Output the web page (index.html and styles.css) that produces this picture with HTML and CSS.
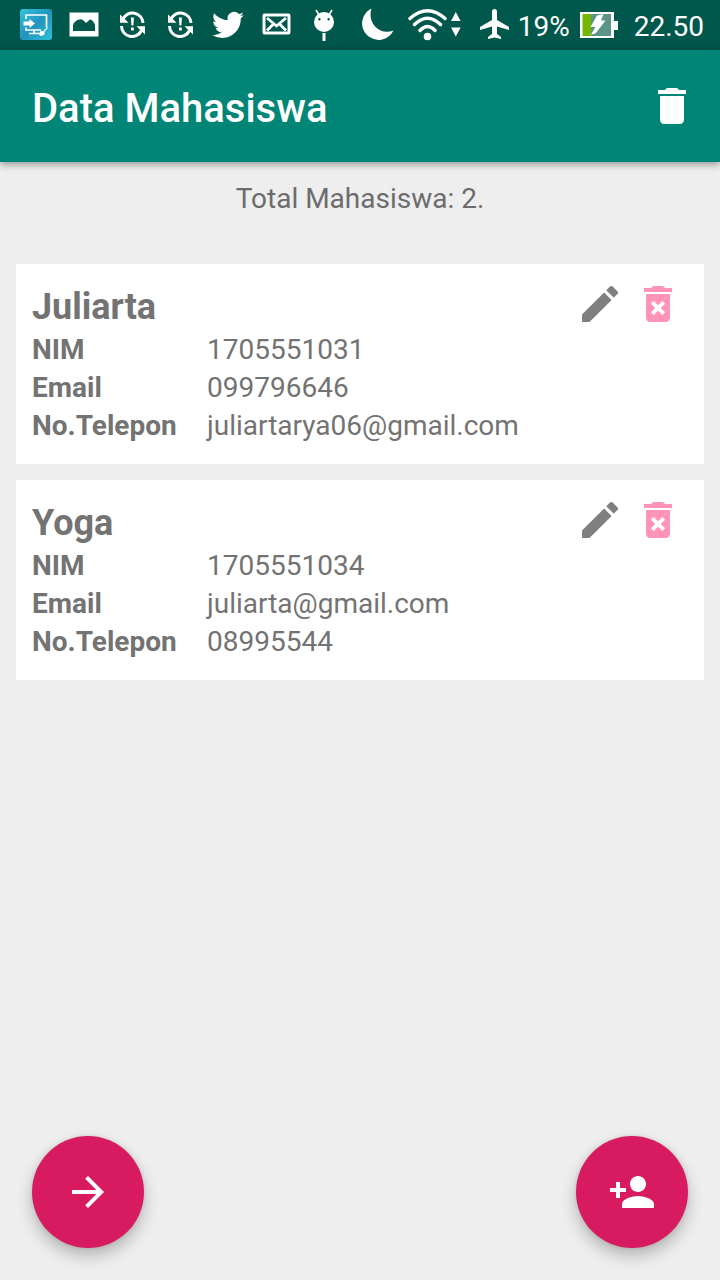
FILE: index.html
```html
<!DOCTYPE html>
<html lang="id">
<head>
<meta charset="utf-8">
<meta name="viewport" content="width=device-width, initial-scale=1">
<title>Data Mahasiswa</title>
<link rel="stylesheet" href="styles.css">
</head>
<body>
<svg class="sprite" aria-hidden="true">
  <symbol id="edit" viewBox="0 0 24 24"><path d="M3 17.25V21h3.75L17.81 9.94l-3.75-3.75L3 17.25zM20.71 7.04c.39-.39.39-1.02 0-1.41l-2.34-2.34c-.39-.39-1.02-.39-1.41 0l-1.83 1.83 3.75 3.75 1.83-1.83z"/></symbol>
  <symbol id="remove" viewBox="0 0 24 24"><path d="M6 19c0 1.1.9 2 2 2h8c1.1 0 2-.9 2-2V7H6v12zm2.46-7.12l1.41-1.41L12 12.59l2.12-2.12 1.41 1.41L13.41 14l2.12 2.12-1.41 1.41L12 15.41l-2.12 2.12-1.41-1.41L10.59 14l-2.13-2.12zM15.5 4l-1-1h-5l-1 1H5v2h14V4z"/></symbol>
  <symbol id="sync" viewBox="0 0 48 50">
    <path d="M15 19A10.500 10.500 0 0 1 35 23M13.500 26A10.500 10.500 0 0 0 33.500 30.500" fill="none" stroke="currentColor" stroke-width="3"/>
    <path d="M12 14.500v8.300h8.500zM37 34.500v-8.300h-8.500zM22.900 17.500h3l-.5 8h-2zM23 27.500h2.800v3H23z"/>
  </symbol>
</svg>
<div class="screen">
  <div class="status">
    <div class="notices">
      <svg class="notice" viewBox="0 0 48 50">
        <defs><linearGradient id="tile" x1="0" y1="0" x2="1" y2="1"><stop offset="0" stop-color="#35c4dc"/><stop offset=".5" stop-color="#2194bd"/><stop offset="1" stop-color="#2fc0d8"/></linearGradient></defs>
        <rect x="8" y="9" width="32" height="31" rx="3" fill="url(#tile)"/>
        <path d="M14 19v-4h20.500v12M14 27.500V30h15M22 30v3M17 33.500h10" fill="none" stroke="#fff" stroke-width="1.700"/>
        <path d="M11.500 21.500h6V19l5.500 4.500-5.500 4.500v-2.500h-6zM35 27l1 .8-3.500 4c1 3-2 4.500-4.500 4-1.500-1-.8-3.500.5-4.500 1-.8 2-.7 3-.1z"/>
      </svg>
      <svg class="notice" viewBox="0 0 48 50"><path fill-rule="evenodd" d="M9.500 12.500h29v24h-29zM13 31h22v-6.500Q32 19 30 19.500L26 23Q22 18 19.500 19.500Q15 20 13 25z"/></svg>
      <svg class="notice"><use href="#sync"/></svg>
      <svg class="notice"><use href="#sync"/></svg>
      <svg class="notice" viewBox="0 0 48 50"><path transform="translate(8 9) scale(1.333)" d="M23.953 4.570a10 10 0 01-2.825.775 4.958 4.958 0 002.163-2.723c-.951.555-2.005.959-3.127 1.184a4.920 4.920 0 00-8.384 4.482C7.690 8.095 4.067 6.130 1.640 3.162a4.822 4.822 0 00-.666 2.475c0 1.710.870 3.213 2.188 4.096a4.904 4.904 0 01-2.228-.616v.060a4.923 4.923 0 003.946 4.827 4.996 4.996 0 01-2.212.085 4.936 4.936 0 004.604 3.417 9.867 9.867 0 01-6.102 2.105c-.390 0-.779-.023-1.170-.067a13.995 13.995 0 007.557 2.209c9.053 0 13.998-7.496 13.998-13.985 0-.210 0-.420-.015-.630A9.935 9.935 0 0024 4.590z"/></svg>
      <svg class="notice" viewBox="0 0 48 50">
        <rect x="12" y="15" width="25" height="18" rx=".5" fill="none" stroke="currentColor" stroke-width="3"/>
        <path d="M15 18l9.500 8 9.500-8M15 30.500l6.500-6.500M34 30.500L27.500 24" fill="none" stroke="currentColor" stroke-width="2.800"/>
      </svg>
      <svg class="notice" viewBox="0 0 48 50">
        <path fill-rule="evenodd" d="M14 22a10 10 0 0 1 20 0a10 10 0 0 1-20 0zM18.200 19.200a1.200 1.200 0 1 0 2.400 0a1.200 1.200 0 1 0-2.400 0zM27.400 19.200a1.200 1.200 0 1 0 2.400 0a1.200 1.200 0 1 0-2.400 0z"/>
        <path d="M16 10l3 5M32 10l-3 5" stroke="currentColor" stroke-width="1.500"/>
        <path d="M22.500 33h3v8h-3z"/>
      </svg>
    </div>
    <div class="system">
      <svg class="moon" viewBox="0 0 34 50"><path d="M11.500 8.500A16.500 16.500 0 1 0 33.500 30.500C27 33 20 32 15 26.500C10.500 21.500 9.500 14.500 11.500 8.500z"/></svg>
      <svg class="wifi" viewBox="0 0 54 50">
        <path d="M2 18.500Q19.500 3 37 18.500M6.500 24.500Q19.500 12 32.500 24.500M12 30.500Q19.500 22.500 27 30.500" fill="none" stroke="currentColor" stroke-width="3.400" stroke-linecap="round"/>
        <circle cx="19.500" cy="36.500" r="3.800"/><path d="M43 21l4.800-9 4.800 9zM43 27.500h9.600l-4.800 9z"/>
      </svg>
      <svg class="plane" viewBox="0 0 29 50"><path d="M12 11.500a2.500 2.500 0 0 1 5 0V20l12 7v3l-12-3.500V34l4 3v2l-6.500-1.500L8 39v-2l4-3v-7.500L0 30v-3l12-7z"/></svg>
      <span class="percent">19%</span>
      <svg class="battery" viewBox="0 0 38 50">
        <path d="M0 12h34v9h4v9h-4v8H0z"/><path fill="#5d9488" d="M10 14h21v22H10z"/><path fill="#74b600" d="M2.500 14H11v22H2.500z"/>
        <path d="M17 15.500L23.500 14 21 20.500h4.500L15.500 33.500l-4.500 1 4.500-7.500h-5z"/>
      </svg>
      <span class="clock">22.50</span>
    </div>
  </div>
  <header class="appbar">
    <h1 class="title">Data Mahasiswa</h1>
    <button class="icon-button" aria-label="Hapus semua"><svg class="icon" viewBox="0 0 24 24"><path d="M6 19c0 1.100.900 2 2 2h8c1.100 0 2-.900 2-2V7H6v12zM19 4h-3.500l-1-1h-5l-1 1H5v2h14V4z"/></svg></button>
  </header>
  <main class="content">
    <p class="total">Total Mahasiswa: 2.</p>
    <article class="card">
      <div class="details">
        <h2 class="name">Juliarta</h2>
        <dl class="fields">
          <dt>NIM</dt><dd>1705551031</dd>
          <dt>Email</dt><dd>099796646</dd>
          <dt>No.Telepon</dt><dd>juliartarya06@gmail.com</dd>
        </dl>
      </div>
      <div class="actions">
        <button class="icon-button edit" aria-label="Ubah"><svg class="icon"><use href="#edit"/></svg></button>
        <button class="icon-button remove" aria-label="Hapus"><svg class="icon"><use href="#remove"/></svg></button>
      </div>
    </article>
    <article class="card">
      <div class="details">
        <h2 class="name">Yoga</h2>
        <dl class="fields">
          <dt>NIM</dt><dd>1705551034</dd>
          <dt>Email</dt><dd>juliarta@gmail.com</dd>
          <dt>No.Telepon</dt><dd>08995544</dd>
        </dl>
      </div>
      <div class="actions">
        <button class="icon-button edit" aria-label="Ubah"><svg class="icon"><use href="#edit"/></svg></button>
        <button class="icon-button remove" aria-label="Hapus"><svg class="icon"><use href="#remove"/></svg></button>
      </div>
    </article>
  </main>
  <footer class="fabs">
    <button class="fab" aria-label="Lanjut"><svg class="icon" viewBox="0 0 24 24"><path d="M12 4l-1.410 1.410L16.170 11H4v2h12.170l-5.580 5.590L12 20l8-8z"/></svg></button>
    <button class="fab" aria-label="Tambah mahasiswa"><svg class="icon" viewBox="0 0 24 24"><path d="M15 12c2.210 0 4-1.790 4-4s-1.790-4-4-4-4 1.790-4 4 1.790 4 4 4zm-9-2V7H4v3H1v2h3v3h2v-3h3v-2H6zm9 4c-2.670 0-8 1.340-8 4v2h16v-2c0-2.660-5.330-4-8-4z"/></svg></button>
  </footer>
</div>
</body>
</html>
```

FILE: styles.css
```css
* {
  box-sizing: border-box;
}

body {
  margin: 0;
  background: #eeeeee;
  color: #737373;
  font-family: Roboto, "Liberation Sans", sans-serif;
  font-size: 28px;
}

h1, h2, p, dl, dd {
  margin: 0;
}

svg {
  display: block;
  flex: none;
  fill: currentColor;
}

.sprite {
  position: absolute;
  width: 0;
  height: 0;
}

.screen {
  display: flex;
  flex-direction: column;
  min-height: 100vh;
}

.status {
  display: flex;
  justify-content: space-between;
  height: 50px;
  padding: 0 16px 0 12px;
  background: #00574b;
  color: #ffffff;
  line-height: 54px;
}

.notices,
.system {
  display: flex;
}

.notice {
  width: 48px;
  height: 50px;
}

.moon {
  width: 34px;
  height: 50px;
  margin-right: 14px;
}

.wifi {
  width: 54px;
  height: 50px;
  margin-right: 18px;
}

.plane {
  width: 29px;
  height: 50px;
  margin-right: 9px;
}

.battery {
  width: 38px;
  height: 50px;
  margin: 0 16px 0 10px;
}

.appbar {
  display: flex;
  align-items: center;
  justify-content: space-between;
  height: 112px;
  padding: 0 24px 0 32px;
  background: #008577;
  color: #ffffff;
  box-shadow: 0 2px 8px rgba(0, 0, 0, 0.4);
}

.title {
  padding-top: 6px;
  font-size: 40px;
  font-weight: 500;
  line-height: 48px;
}

.icon-button {
  padding: 0;
  border: 0;
  background: none;
  color: inherit;
}

.icon {
  width: 48px;
  height: 48px;
}

.content {
  display: flex;
  flex: 1;
  flex-direction: column;
  gap: 16px;
  padding: 20px 16px;
}

.total {
  margin-bottom: 32px;
  color: #6c6c6c;
  line-height: 34px;
  text-align: center;
}

.card {
  display: flex;
  justify-content: space-between;
  padding: 16px 22px 19px 16px;
  background: #ffffff;
}

.details {
  padding-top: 5px;
}

.name {
  padding-bottom: 2px;
  font-size: 36px;
  font-weight: 700;
  line-height: 44px;
}

.fields {
  display: grid;
  grid-template-columns: 175px auto;
  line-height: 38px;
}

dt {
  font-weight: 700;
}

.actions {
  display: flex;
  gap: 10px;
  align-items: flex-start;
}

.edit {
  color: #808080;
}

.remove {
  color: #ff94b8;
}

.fabs {
  display: flex;
  justify-content: space-between;
  padding: 32px;
}

.fab {
  display: grid;
  place-items: center;
  width: 112px;
  height: 112px;
  padding: 0;
  border: 0;
  border-radius: 50%;
  background: #d81b60;
  color: #ffffff;
  box-shadow: 0 8px 16px rgba(0, 0, 0, 0.24), 0 0 4px rgba(0, 0, 0, 0.1);
}
```
